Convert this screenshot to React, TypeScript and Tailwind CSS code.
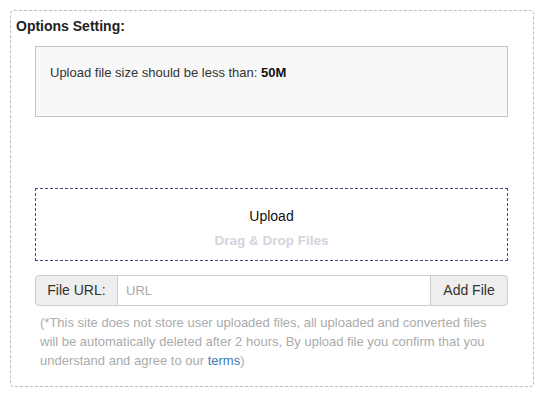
import React from "react";

export default function App() {
  return (
    <div className="w-[544px] h-[394px] bg-white pt-[10px] px-[10px]" style={{ fontFamily: '"Liberation Sans", Arial, sans-serif' }}>
      <div className="h-[377px] border border-dashed border-[#bdbdbd] rounded-[4px] pt-[5px] pl-[5px] pr-[25px]">
        <div className="text-[14px] font-bold text-[#222] leading-[20px]">Options Setting:</div>
        <div className="pl-[19px]">
          <div className="mt-[10px] h-[71px] border border-[#c4c4c4] bg-[#f8f8f8] pl-[14px] pt-[17px] text-[13px] leading-[18px] text-[#333]">
            Upload file size should be less than: <b className="text-[#111]">50M</b>
          </div>
          <div className="mt-[71px] h-[73px] border border-dashed border-[#3d4a8a] flex flex-col items-center pt-[18px]">
            <div className="text-[14px] leading-[18px] text-[#111]">Upload</div>
            <div className="mt-[8px] text-[13.5px] leading-[16px] font-bold text-[#d3d3de]">Drag &amp; Drop Files</div>
          </div>
          <div className="mt-[14px] h-[31px] flex text-[14px]">
            <div className="w-[83px] flex items-center justify-center bg-[#eeeeee] border border-[#cccccc] rounded-l-[4px] text-[#333]">File URL:</div>
            <div className="flex-1 flex items-center pl-[8px] border-y border-[#cccccc] bg-white text-[#aaa] text-[13px]">URL</div>
            <div className="w-[78px] flex items-center justify-center bg-[#eeeeee] border border-[#cccccc] rounded-r-[4px] text-[#333]">Add File</div>
          </div>
          <p className="mt-[7px] pl-[5px] pr-[8px] text-[13px] leading-[19px] text-[#ababab]">
            (*This site does not store user uploaded files, all uploaded and converted files will be automatically deleted after 2 hours, By upload file you confirm that you understand and agree to our <span className="text-[#3d7ab8]">terms</span>)
          </p>
        </div>
      </div>
    </div>
  );
}
